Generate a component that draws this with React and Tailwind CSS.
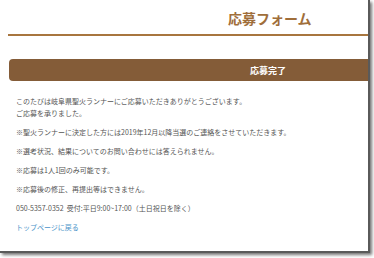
export default function App() {
  const jp = { fontFamily: '"Noto Sans CJK JP", "Noto Sans", sans-serif' };
  return (
    <div className="w-[374px] h-[258px] bg-white overflow-hidden" style={jp}>
      <div className="w-[370px] h-[253px] bg-white border-r-2 border-b-2 border-[#5a5a5a] shadow-[2px_2px_3px_rgba(0,0,0,0.55)] flex flex-col">
        <div className="h-[34px] pl-[228px] pt-[8px]">
          <h1 className="text-[14px] leading-[20px] font-bold text-[#a06e3a] tracking-[0px]">応募フォーム</h1>
        </div>
        <div className="ml-[8px] h-[2px] bg-[#a8763f]" />
        <div className="mt-[23px] ml-[9px] h-[22px] bg-[#845c38] rounded-l-[4px] flex items-center pl-[241px]">
          <span className="text-white text-[9px] font-bold leading-none">応募完了</span>
        </div>
        <div className="mt-[14px] pl-[16px] text-[7px] leading-[12px] text-[#555] flex flex-col gap-[7px]">
          <p>
            このたびは岐阜県聖火ランナーにご応募いただきありがとうございます。
            <br />
            ご応募を承りました。
          </p>
          <p>※聖火ランナーに決定した方には2019年12月以降当選のご連絡をさせていただきます。</p>
          <p>※選考状況、結果についてのお問い合わせには答えられません。</p>
          <p>※応募は1人1回のみ可能です。</p>
          <p>※応募後の修正、再提出等はできません。</p>
          <p>050-5357-0352&nbsp;&nbsp;受付:平日9:00~17:00（土日祝日を除く）</p>
          <p>
            <a className="text-[#4a93c9]">トップページに戻る</a>
          </p>
        </div>
      </div>
    </div>
  );
}
